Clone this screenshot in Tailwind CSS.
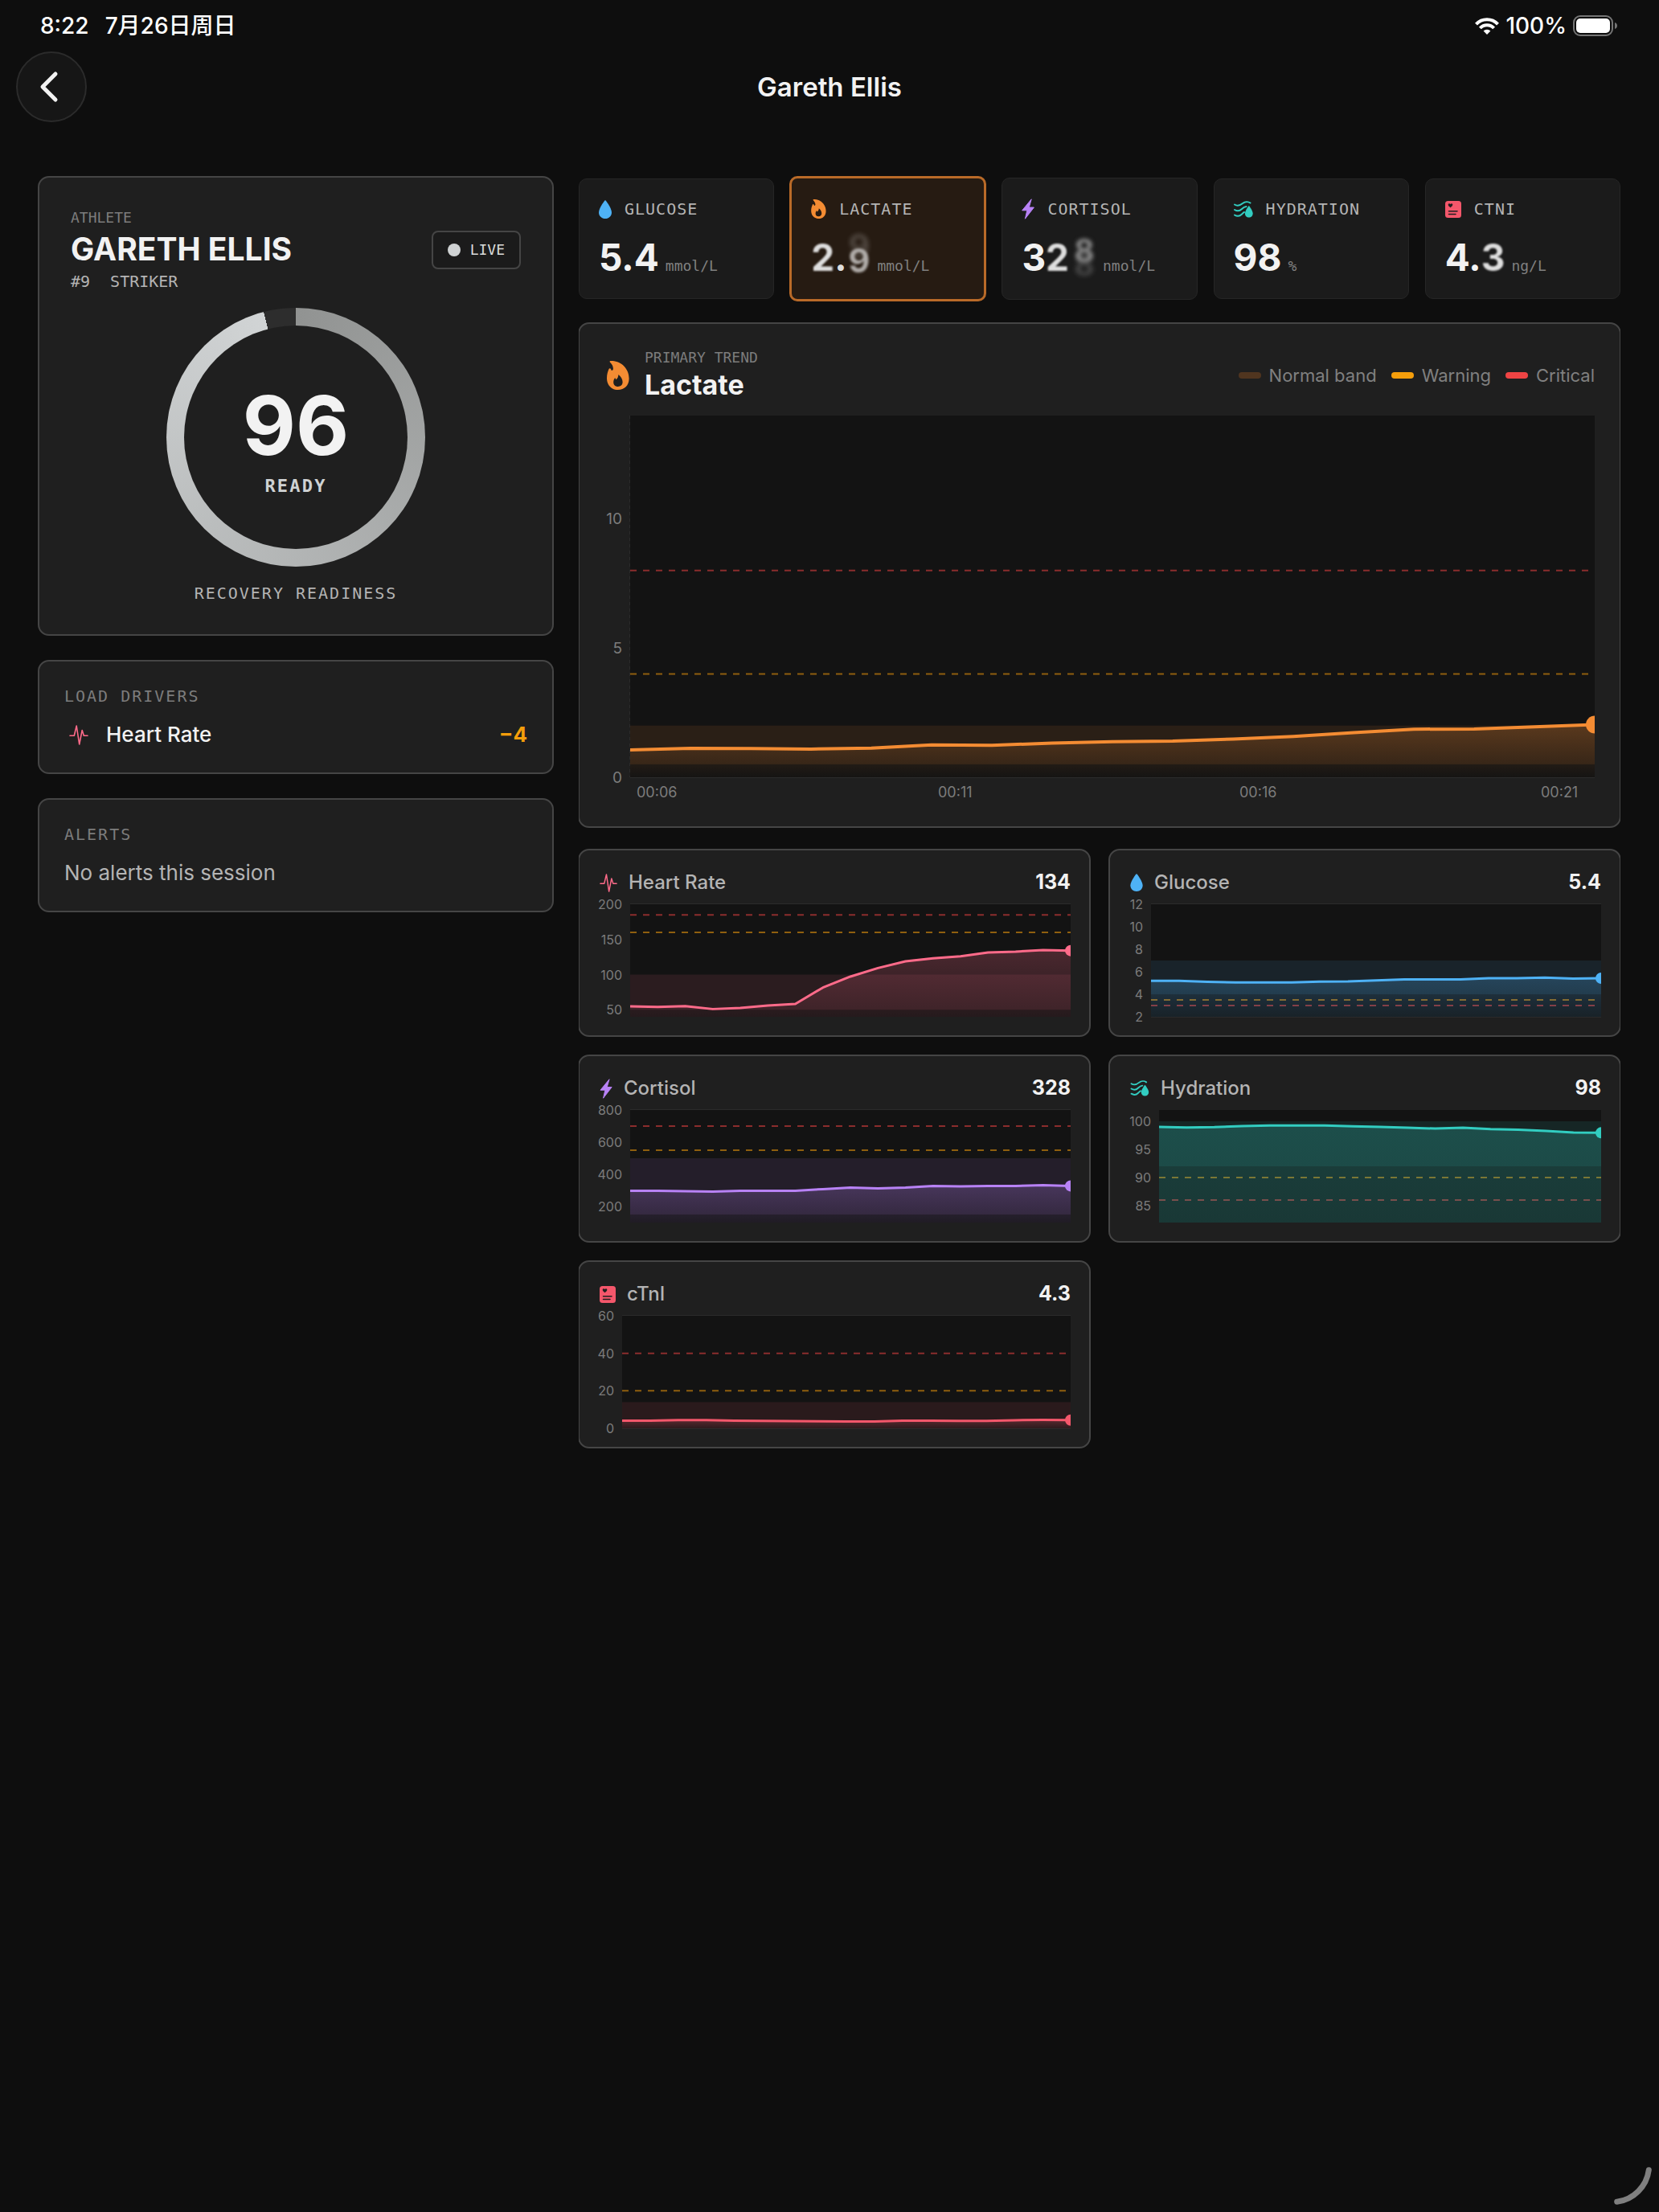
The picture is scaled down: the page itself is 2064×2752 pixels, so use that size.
<!DOCTYPE html>
<html lang="en">
<head>
  <meta charset="UTF-8" />
  <meta name="viewport" content="width=device-width, initial-scale=1.0" />
  <title>Gareth Ellis</title>
  <script src="https://cdn.jsdelivr.net/npm/@tailwindcss/browser@4"></script>
</head>
<body class="min-h-screen bg-[#0e0e0e] text-[#f2f2f2] font-['Inter','Noto_Sans_CJK_SC',sans-serif]">

<!-- Icons -->
<svg class="hidden">
  <symbol id="i-drop" viewBox="0 0 16 23"><path fill="currentColor" d="M8 0C8.500 0 16 10 16 15.200C16 19.800 12.500 23 8 23S0 19.800 0 15.200C0 10 7.500 0 8 0Z"/></symbol>
  <symbol id="i-flame" viewBox="0 0 28 36"><path fill="currentColor" fill-rule="evenodd" d="M4.500 0C17 -.6 27.600 9 27.600 22C27.600 30.500 21.800 36 13.800 36C5.500 36 0 30 0 21.500C0 16.500 1.200 13.200 2.700 9.800C3.200 8.900 4.500 8.900 4.900 9.900L5.800 12C7 12 7.900 11.200 7.900 9.800C7.900 6.500 6.200 4 4 1.800C3.200 .9 3.600 .1 4.500 0ZM14.400 17C14.400 20 12.900 22.300 11.300 23.300L10.200 21C9 22.500 8.200 24.200 8.200 26.500C8.200 29.800 10.500 32 13.800 32C17.100 32 19.600 29.900 19.600 26.300C19.600 22.800 17.500 19.300 14.400 17Z"/></symbol>
  <symbol id="i-bolt" viewBox="0 0 16 26"><path fill="currentColor" stroke="currentColor" stroke-linejoin="round" d="M12.200 .8L.7 14.800H6.800L4.400 25.200L15.400 11H9.300Z"/></symbol>
  <symbol id="i-water" viewBox="0 0 24 21"><path fill="none" stroke="currentColor" stroke-width="2" stroke-linecap="round" d="M1 4.500C5 7 8 5.500 11 3C14 .6 18 .6 20.500 2.500M1 11C5 13.500 8 12 10 10C12 8 13.500 7.200 15.500 7M1 17.500C5 20 8 18.500 10 16.500C11.200 15.300 11.800 14.500 13 14"/><path fill="currentColor" d="M18.800 6C19.100 6 23.700 12.300 23.700 15.500C23.700 18.500 21.600 20.500 18.800 20.500S13.900 18.500 13.900 15.500C13.900 12.300 18.500 6 18.800 6Z"/></symbol>
  <symbol id="i-card" viewBox="0 0 20 21"><rect width="20" height="21" rx="3.500" fill="currentColor"/><path fill="#1f1f1f" d="M6.500 8.300C4.800 6.900 3.700 5.900 3.700 4.700C3.700 3 5.700 2.700 6.500 4.100C7.300 2.700 9.300 3 9.300 4.700C9.300 5.900 8.200 6.900 6.500 8.300Z"/><path stroke="#1f1f1f" stroke-width="1.500" stroke-linecap="round" d="M4.500 12.800H15M4.500 16.500H13"/></symbol>
  <symbol id="i-pulse" viewBox="0 0 24 25"><path fill="none" stroke="currentColor" stroke-width="1.600" stroke-linejoin="round" stroke-linecap="round" d="M1 13.200H6.300L9.200 1L12.700 24L16.200 6.500L18.300 13.200H23"/></symbol>
</svg>

<div class="h-16 pl-[50px] pr-[51px] flex items-center justify-between text-[28px] leading-8 font-medium text-white">
  <div class="flex items-center gap-5">
    <span>8:22</span>
    <span>7月26日周日</span>
  </div>
  <div class="flex items-center gap-2">
    <svg class="w-[30px] h-[21px]" viewBox="0 0 30 21">
      <path fill="none" stroke="#fff" stroke-width="4" d="M1.500 8.200A18.500 18.500 0 0 1 28.500 8.200M6.400 13A11.800 11.800 0 0 1 23.600 13"/>
      <path fill="#fff" d="M15 21L10.600 16.600A6.200 6.200 0 0 1 19.400 16.600Z"/>
    </svg>
    <span>100%</span>
    <svg class="w-14 h-[26px]" viewBox="0 0 56 26">
      <rect x="1" y="1" width="48" height="24" rx="8" fill="none" stroke="#757575" stroke-width="2"/>
      <rect x="4" y="4" width="42" height="18" rx="5" fill="#fff"/>
      <path d="M52 9C54.500 10 55 11.500 55 13S54.500 16 52 17Z" fill="#757575"/>
    </svg>
  </div>
</div>

<header class="px-5 grid grid-cols-[88px_1fr_88px] items-center">
  <button aria-label="Back" class="size-22 rounded-full border-2 border-[#2b2b2b] bg-[#161616] flex items-center justify-center">
    <svg class="w-6 h-10 -ml-1.5" viewBox="0 0 24 40"><path d="M20 4L4 20L20 36" fill="none" stroke="#f2f2f2" stroke-width="5" stroke-linecap="round" stroke-linejoin="round"/></svg>
  </button>
  <h1 class="text-center text-[33px] leading-10 font-semibold">Gareth Ellis</h1>
</header>

<main class="mt-[67px] pl-[47px] pr-12 pb-12 grid grid-cols-[642px_1fr] items-start gap-x-[31px]">

  <aside class="flex flex-col gap-[30px]">
    <section class="rounded-[14px] border-2 border-[#454545] bg-[#1f1f1f] p-[39px] flex flex-col gap-[21px]">
      <div class="flex items-center justify-between">
        <div class="flex flex-col gap-1">
          <p class="font-['DejaVu_Sans_Mono',monospace] text-[18px] leading-[22px] text-[#7c7c7c]">ATHLETE</p>
          <h2 class="text-[39px] leading-12 font-bold">GARETH ELLIS</h2>
          <p class="font-['DejaVu_Sans_Mono',monospace] text-[20px] leading-6 text-[#b4b4b4] flex gap-[25px]"><span>#9</span><span>STRIKER</span></p>
        </div>
        <div class="h-12 px-[18px] rounded-lg border-2 border-[#454545] bg-[#1b1b1b] flex items-center gap-3">
          <span class="size-4 rounded-full bg-[#cfd2d3]"></span>
          <span class="font-['DejaVu_Sans_Mono',monospace] text-[18px] leading-6 text-[#d8dada]">LIVE</span>
        </div>
      </div>
      <div class="self-center size-[322px] rounded-full p-[22px] bg-[conic-gradient(#919392,#d1d4d5_345.6deg,#2d2d2d_345.6deg)]">
        <div class="size-full rounded-full bg-[#1f1f1f] flex flex-col items-center justify-center gap-1">
          <span class="text-[102px] leading-[118px] font-bold">96</span>
          <span class="font-['DejaVu_Sans_Mono',monospace] text-[22px] leading-[26px] font-bold tracking-widest text-[#cfd2d3]">READY</span>
        </div>
      </div>
      <p class="text-center font-['DejaVu_Sans_Mono',monospace] text-[20px] leading-6 tracking-widest text-[#b4b4b4]">RECOVERY READINESS</p>
    </section>

    <section class="rounded-[14px] border-2 border-[#454545] bg-[#1f1f1f] p-[31px] flex flex-col gap-5">
      <h3 class="font-['DejaVu_Sans_Mono',monospace] text-[20px] leading-6 tracking-widest text-[#7c7c7c]">LOAD DRIVERS</h3>
      <div class="flex items-center gap-4 text-[26px] leading-8">
        <span class="w-9 flex justify-center text-[#ff6b8a]"><svg class="w-6 h-[25px]"><use href="#i-pulse"/></svg></span>
        <span class="font-medium">Heart Rate</span>
        <span class="ml-auto font-bold text-[#f59e0b]">−4</span>
      </div>
    </section>

    <section class="rounded-[14px] border-2 border-[#454545] bg-[#1f1f1f] p-[31px] flex flex-col gap-5">
      <h3 class="font-['DejaVu_Sans_Mono',monospace] text-[20px] leading-6 tracking-widest text-[#7c7c7c]">ALERTS</h3>
      <p class="text-[26px] leading-8 text-[#b4b4b4]">No alerts this session</p>
    </section>
  </aside>

  <div class="overflow-x-clip">
    <div class="h-[156px] grid grid-cols-5 items-center gap-5 font-['DejaVu_Sans_Mono',monospace] text-[20px] text-[#b4b4b4]">
      <button class="rounded-[10px] border border-[#262626] bg-[#1b1b1b] px-6 py-[23px] text-left">
        <span class="flex items-center gap-4 leading-7 tracking-wider"><svg class="w-4 h-[23px] text-[#4eb2f6]"><use href="#i-drop"/></svg>GLUCOSE</span>
        <span class="mt-[18px] flex items-baseline gap-2"><span class="font-['Inter'] text-[46px] leading-14 font-bold text-[#f2f2f2]">5.4</span><span class="text-[18px] leading-none text-[#808080]">mmol/L</span></span>
      </button>
      <button class="-mx-px rounded-[10px] border-3 border-[#b96a28] bg-[#261b12] px-6 py-6 text-left">
        <span class="flex items-center gap-4 leading-7 tracking-wider"><svg class="w-[19px] h-6 text-[#f48c33]"><use href="#i-flame"/></svg>LACTATE</span>
        <span class="mt-[18px] flex items-baseline gap-2">
          <span class="font-['Inter'] text-[46px] leading-14 font-bold text-[#dedede] flex"><span class="blur-[1px]">2</span><span>.</span><span class="blur-[2px] translate-y-1 scale-90 text-[#b0aca9] [text-shadow:0_-20px_6px_rgba(255,255,255,0.2)]">9</span></span>
          <span class="text-[18px] leading-none text-[#808080]">mmol/L</span>
        </span>
      </button>
      <button class="rounded-[10px] border border-[#262626] bg-[#1b1b1b] px-6 py-6 text-left">
        <span class="flex items-center gap-4 leading-7 tracking-wider"><svg class="w-4 h-[26px] text-[#b882f6]"><use href="#i-bolt"/></svg>CORTISOL</span>
        <span class="mt-[18px] flex items-baseline gap-2">
          <span class="font-['Inter'] text-[46px] leading-14 font-bold text-[#f2f2f2] flex"><span>3</span><span class="blur-[1px] text-[#dedede]">2</span><span class="ml-1 blur-[3px] -translate-y-2 scale-85 text-[#8a8a8a] [text-shadow:0_20px_4px_rgba(255,255,255,0.2)]">8</span></span>
          <span class="text-[18px] leading-none text-[#808080]">nmol/L</span>
        </span>
      </button>
      <button class="rounded-[10px] border border-[#262626] bg-[#1b1b1b] px-6 py-[23px] text-left">
        <span class="flex items-center gap-4 leading-7 tracking-wider"><svg class="w-6 h-[21px] text-[#32cdc1]"><use href="#i-water"/></svg>HYDRATION</span>
        <span class="mt-[18px] flex items-baseline gap-2"><span class="font-['Inter'] text-[46px] leading-14 font-bold text-[#f2f2f2]">98</span><span class="text-[18px] leading-none text-[#808080]">%</span></span>
      </button>
      <button class="rounded-[10px] border border-[#262626] bg-[#1b1b1b] px-6 py-[23px] text-left">
        <span class="flex items-center gap-4 leading-7 tracking-wider"><svg class="w-5 h-[21px] text-[#f4576b]"><use href="#i-card"/></svg>CTNI</span>
        <span class="mt-[18px] flex items-baseline gap-2">
          <span class="font-['Inter'] text-[46px] leading-14 font-bold text-[#f2f2f2] flex"><span>4.</span><span class="blur-[1px] text-[#dedede]">3</span></span>
          <span class="text-[18px] leading-none text-[#808080]">ng/L</span>
        </span>
      </button>
    </div>

    <section class="-mx-px mt-[26px] rounded-[14px] border-2 border-[#454545] bg-[#1f1f1f] px-[31px] py-[30px]">
      <div class="flex items-center justify-between">
        <div class="flex items-center gap-[19px]">
          <svg class="ml-[3px] w-7 h-9 text-[#f48c33]"><use href="#i-flame"/></svg>
          <div>
            <p class="font-['DejaVu_Sans_Mono',monospace] text-[18px] leading-6 text-[#7c7c7c]">PRIMARY TREND</p>
            <h2 class="text-[34px] leading-[44px] font-bold">Lactate</h2>
          </div>
        </div>
        <ul class="flex gap-[18px] text-[22px] leading-7 text-[#808080]">
          <li class="flex items-center gap-[10px]"><span class="w-7 h-2 rounded bg-[#50351f]"></span>Normal band</li>
          <li class="flex items-center gap-[10px]"><span class="w-7 h-2 rounded bg-[#f59e0b]"></span>Warning</li>
          <li class="flex items-center gap-[10px]"><span class="w-7 h-2 rounded bg-[#ef4444]"></span>Critical</li>
        </ul>
      </div>
      <svg data-chart="lactate" class="mt-4 block w-full h-[450px] overflow-visible text-[19px]"></svg>
      <div class="mt-[7px] pl-8 flex text-[18px] leading-6 text-[#7c7c7c]">
        <span class="w-[31.25%] pl-2">00:06</span>
        <span class="w-[31.25%] pl-2">00:11</span>
        <span class="w-[31.25%] pl-2">00:16</span>
        <span class="pl-2">00:21</span>
      </div>
    </section>

    <div class="-mx-px mt-[26px] grid grid-cols-2 gap-[22px]">
      <section class="rounded-[14px] border-2 border-[#454545] bg-[#1f1f1f] p-[23px]">
        <div class="flex items-center h-[34px]">
          <svg class="mx-0.5 w-[22px] h-[23px] text-[#ff6b8a]"><use href="#i-pulse"/></svg>
          <h3 class="ml-3 text-[24px] font-medium text-[#b4b4b4]">Heart Rate</h3>
          <span class="ml-auto text-[25px] font-bold">134</span>
        </div>
        <svg data-chart="heart" class="mt-[10px] block w-full h-[140px] overflow-visible text-[16px]"></svg>
      </section>
      <section class="rounded-[14px] border-2 border-[#454545] bg-[#1f1f1f] p-[23px]">
        <div class="flex items-center h-[34px]">
          <svg class="mx-0.5 w-4 h-[22px] text-[#4eb2f6]"><use href="#i-drop"/></svg>
          <h3 class="ml-3 text-[24px] font-medium text-[#b4b4b4]">Glucose</h3>
          <span class="ml-auto text-[25px] font-bold">5.4</span>
        </div>
        <svg data-chart="glucose" class="mt-[10px] block w-full h-[140px] overflow-visible text-[16px]"></svg>
      </section>
      <section class="rounded-[14px] border-2 border-[#454545] bg-[#1f1f1f] p-[23px]">
        <div class="flex items-center h-[34px]">
          <svg class="mx-0.5 w-4 h-[25px] text-[#b882f6]"><use href="#i-bolt"/></svg>
          <h3 class="ml-3 text-[24px] font-medium text-[#b4b4b4]">Cortisol</h3>
          <span class="ml-auto text-[25px] font-bold">328</span>
        </div>
        <svg data-chart="cortisol" class="mt-[10px] block w-full h-[140px] overflow-visible text-[16px]"></svg>
      </section>
      <section class="rounded-[14px] border-2 border-[#454545] bg-[#1f1f1f] p-[23px]">
        <div class="flex items-center h-[34px]">
          <svg class="mx-0.5 w-6 h-5 text-[#32cdc1]"><use href="#i-water"/></svg>
          <h3 class="ml-3 text-[24px] font-medium text-[#b4b4b4]">Hydration</h3>
          <span class="ml-auto text-[25px] font-bold">98</span>
        </div>
        <svg data-chart="hydration" class="mt-[10px] block w-full h-[140px] overflow-visible text-[16px]"></svg>
      </section>
      <section class="rounded-[14px] border-2 border-[#454545] bg-[#1f1f1f] p-[23px]">
        <div class="flex items-center h-[34px]">
          <svg class="mx-0.5 w-5 h-[21px] text-[#f4576b]"><use href="#i-card"/></svg>
          <h3 class="ml-3 text-[24px] font-medium text-[#b4b4b4]">cTnI</h3>
          <span class="ml-auto text-[25px] font-bold">4.3</span>
        </div>
        <svg data-chart="ctni" class="mt-[10px] block w-full h-[140px] overflow-visible text-[16px]"></svg>
      </section>
    </div>
  </div>
</main>

<svg class="fixed right-2 bottom-2 w-12 h-12" viewBox="0 0 48 48"><path d="M3.700 43.300A46 46 0 0 0 43.300 3.700" fill="none" stroke="#808080" stroke-width="7" stroke-linecap="round"/></svg>

<script>
  const charts = {
    lactate: {
      color: '#f48c33', pad: 32, min: 0, max: 14, ticks: [0, 5, 10], band: [0.5, 2], warn: 4, crit: 8, width: 4, dot: 11,
      data: [1.06, 1.12, 1.11, 1.09, 1.13, 1.25, 1.24, 1.32, 1.38, 1.4, 1.48, 1.58, 1.73, 1.86, 1.87, 1.95, 2.04]
    },
    heart: {
      color: '#ff6b8a', pad: 40, min: 40, max: 200, ticks: [50, 100, 150, 200], band: [50, 100], warn: 160, crit: 185, width: 3, dot: 7,
      data: [54.9, 54.1, 55.2, 51, 52.6, 56, 58.3, 81.5, 97.2, 109.3, 118.9, 123.1, 126.1, 131.4, 132.6, 134.9, 134.1]
    },
    glucose: {
      color: '#4eb2f6', pad: 28, min: 2, max: 12, ticks: [2, 4, 6, 8, 10, 12], band: [4, 7], warn: 3.5, crit: 3, width: 3, dot: 7,
      data: [5.2, 5.2, 5.1, 5.05, 5.05, 5.05, 5.12, 5.14, 5.24, 5.33, 5.33, 5.33, 5.43, 5.43, 5.48, 5.4, 5.43]
    },
    cortisol: {
      color: '#b882f6', pad: 40, min: 100, max: 800, ticks: [200, 400, 600, 800], band: [150, 500], warn: 550, crit: 700, width: 3, dot: 7,
      data: [297, 298, 295, 292, 297, 297, 298, 308, 317, 313, 318, 327, 325, 327, 327, 333, 328]
    },
    hydration: {
      color: '#32cdc1', pad: 38, min: 82, max: 102, ticks: [85, 90, 95, 100], band: [92, 100], warn: 90, crit: 86, width: 3, dot: 7,
      data: [99, 98.9, 98.95, 99.14, 99.24, 99.24, 99.24, 99.1, 99, 98.86, 98.7, 98.86, 98.6, 98.5, 98.3, 98, 97.95]
    },
    ctni: {
      color: '#f4576b', pad: 30, min: 0, max: 60, ticks: [0, 20, 40, 60], band: [0, 14], warn: 20, crit: 40, width: 3, dot: 7,
      data: [4.1, 4.1, 4.4, 4.4, 4.1, 4, 3.9, 3.7, 3.6, 3.6, 4.1, 4.1, 4, 4, 4.3, 4.5, 4.4]
    }
  };

  function drawChart(svg) {
    const name = svg.dataset.chart;
    const c = charts[name];
    const { width: w, height: h } = svg.getBoundingClientRect();
    const y = v => h - (v - c.min) / (c.max - c.min) * h;
    const x = i => c.pad + i * (w - c.pad) / (c.data.length - 1);
    const line = c.data.map((v, i) => `${x(i)},${y(v)}`).join(' L');
    const rule = (v, color) =>
      `<path d="M${c.pad} ${y(v)}H${w}" stroke="${color}" stroke-opacity="0.55" stroke-width="2" stroke-dasharray="8 8"/>`;

    svg.innerHTML = `
      <defs>
        <clipPath id="${name}-clip"><rect x="${c.pad}" width="${w - c.pad}" height="${h}"/></clipPath>
        <linearGradient id="${name}-fill" gradientUnits="userSpaceOnUse" x1="0" x2="0" y1="${y(Math.max(...c.data))}" y2="${y(0)}">
          <stop offset="0" stop-color="${c.color}" stop-opacity="0.24"/>
          <stop offset="1" stop-color="${c.color}" stop-opacity="0.01"/>
        </linearGradient>
      </defs>
      ${c.ticks.map(t => `
        <path d="M${c.pad} ${y(t)}H${w}" stroke="#2b2b2b" stroke-width="2"/>
        <text x="${c.pad - 10}" y="${y(t)}" text-anchor="end" dominant-baseline="central" fill="#7c7c7c">${t}</text>`).join('')}
      ${name === 'lactate' ? `<path d="M${c.pad} 0V${h}" stroke="#2b2b2b" stroke-width="2" stroke-dasharray="4 4"/>` : ''}
      <g clip-path="url(#${name}-clip)">
        <rect x="${c.pad}" width="${w - c.pad}" height="${h}" fill="#131313"/>
        <rect x="${c.pad}" y="${y(c.band[1])}" width="${w - c.pad}" height="${y(c.band[0]) - y(c.band[1])}" fill="${c.color}" fill-opacity="0.1"/>
        ${rule(c.warn, '#f59e0b')}
        ${rule(c.crit, '#ef4444')}
        <path d="M${line} V${h} H${c.pad} Z" fill="url(#${name}-fill)"/>
        <path d="M${line}" fill="none" stroke="${c.color}" stroke-width="${c.width}" stroke-linejoin="round"/>
        <circle cx="${w}" cy="${y(c.data[c.data.length - 1])}" r="${c.dot}" fill="${c.color}"/>
      </g>`;
  }

  // redraw each chart whenever its box changes size
  const observer = new ResizeObserver(entries => entries.forEach(e => drawChart(e.target)));
  document.querySelectorAll('[data-chart]').forEach(svg => observer.observe(svg));
</script>

</body>
</html>
